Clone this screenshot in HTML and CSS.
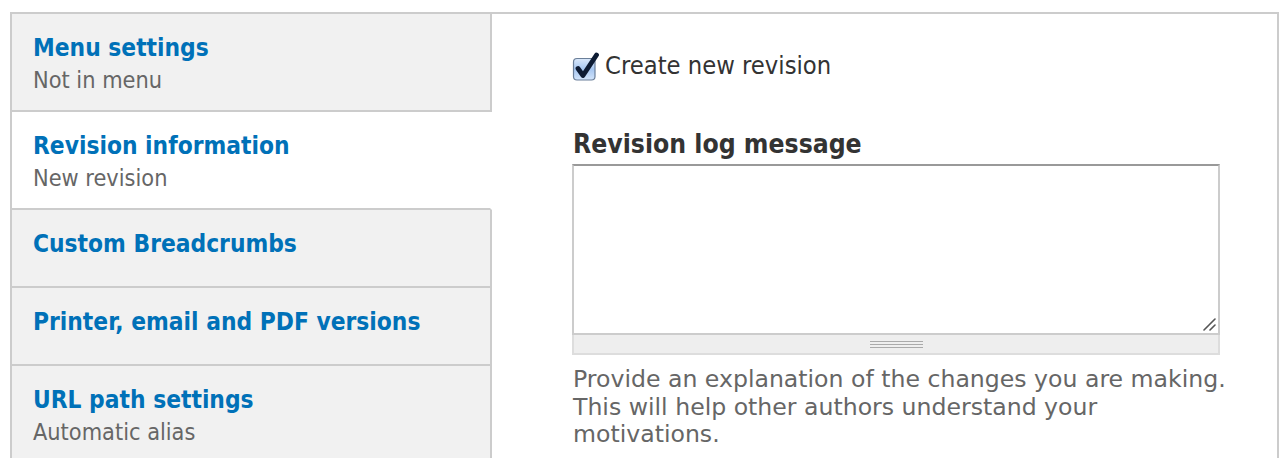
FILE: index.html
```html
<!DOCTYPE html>
<html lang="en">
<head>
<meta charset="utf-8">
<title>Vertical tabs</title>
<link rel="stylesheet" href="styles.css">
</head>
<body>
<div class="vtabs">
  <ul class="tab-list">
    <li class="tab">
      <a class="tab-title" href="#">Menu settings</a>
      <span class="tab-summary">Not in menu</span>
    </li>
    <li class="tab tab-active">
      <a class="tab-title" href="#">Revision information</a>
      <span class="tab-summary">New revision</span>
    </li>
    <li class="tab">
      <a class="tab-title" href="#">Custom Breadcrumbs</a>
    </li>
    <li class="tab">
      <a class="tab-title" href="#">Printer, email and PDF versions</a>
    </li>
    <li class="tab tab-last">
      <a class="tab-title" href="#">URL path settings</a>
      <span class="tab-summary">Automatic alias</span>
    </li>
  </ul>
  <div class="pane">
    <label class="check-row">
      <svg class="check-icon" width="27" height="30" viewBox="0 0 27 30" aria-hidden="true">
        <defs>
          <linearGradient id="boxg" x1="0" y1="0" x2="0" y2="1">
            <stop offset="0" stop-color="#dbe9fb"/>
            <stop offset="0.5" stop-color="#a6c6f0"/>
            <stop offset="1" stop-color="#d3e5fb"/>
          </linearGradient>
        </defs>
        <rect x="1.5" y="7.5" width="21.5" height="21.5" rx="3.5" fill="url(#boxg)" stroke="#6b7f99" stroke-width="1.2"/>
        <path d="M6 17.5 L11 24.5 L24.5 4" fill="none" stroke="#0d1b33" stroke-width="4.8" stroke-linecap="round" stroke-linejoin="round"/>
      </svg>
      <span class="check-label">Create new revision</span>
    </label>
    <div class="field">
      <div class="field-label">Revision log message</div>
      <div class="textarea-wrap">
        <textarea class="log"></textarea>
        <svg class="resizer" width="13" height="13" viewBox="0 0 13 13" aria-hidden="true">
          <path d="M12 1 L1 12 M12 7 L7 12" stroke="#555" stroke-width="1.6" stroke-linecap="round"/>
        </svg>
        <div class="grippie"><span class="grip-lines"></span></div>
      </div>
      <div class="field-desc">Provide an explanation of the changes you are making.<br>This will help other authors understand your<br>motivations.</div>
    </div>
  </div>
</div>
</body>
</html>
```
FILE: styles.css
```css
html, body {
  margin: 0;
  padding: 0;
  background: #fff;
  height: 458px;
  overflow: hidden;
}

body {
  font-family: "DejaVu Sans Condensed", "DejaVu Sans", sans-serif;
  font-stretch: semi-condensed;
  color: #333;
}

.vtabs {
  display: flex;
  margin: 12px 0 0 10px;
  width: 1269px;
  height: 460px;
  border: 2px solid #ccc;
  border-bottom: 0;
  box-sizing: border-box;
}

.tab-list {
  list-style: none;
  margin: 0;
  padding: 0;
  width: 480px;
  flex: none;
  display: flex;
  flex-direction: column;
}

.tab {
  background: #f1f1f1;
  border-right: 2px solid #ccc;
  border-bottom: 2px solid #ccc;
  padding: 11px 20px 20px 21px;
}

.tab-active {
  background: #fff;
  border-right-color: #fff;
}

.tab-last {
  flex: 1;
  border-bottom: 0;
}

.tab-title {
  display: block;
  font-size: 24.3px;
  font-weight: bold;
  line-height: 45px;
  color: #0071b8;
  text-decoration: none;
}

.tab-summary {
  display: block;
  font-size: 23.3px;
  line-height: 20px;
  color: #666;
}

.pane {
  flex: 1;
  padding: 37px 0 0 80px;
  display: flex;
  flex-direction: column;
}

.check-row {
  display: flex;
  align-items: center;
  gap: 6px;
  height: 30px;
}

.check-icon {
  flex: none;
}

.check-label {
  font-size: 25.3px;
  line-height: 30px;
  color: #333;
}

.field {
  display: flex;
  flex-direction: column;
}

.field-label {
  font-size: 26.3px;
  font-weight: bold;
  line-height: 30px;
  margin: 48px 0 5px 1px;
  color: #333;
}

.textarea-wrap {
  position: relative;
  width: 648px;
  display: flex;
  flex-direction: column;
}

.log {
  display: block;
  width: 100%;
  height: 171px;
  box-sizing: border-box;
  margin: 0;
  border: 2px solid #ccc;
  border-top-color: #999;
  background: #fff;
  resize: none;
}

.resizer {
  position: absolute;
  right: 4px;
  bottom: 24px;
}

.grippie {
  height: 20px;
  box-sizing: border-box;
  background: #eee;
  border: 2px solid #ddd;
  border-top: 0;
  display: flex;
  align-items: center;
  justify-content: center;
}

.grip-lines {
  display: block;
  width: 53px;
  height: 7px;
  border-top: 1px solid #aaa;
  border-bottom: 1px solid #aaa;
  box-sizing: border-box;
  background: linear-gradient(#aaa, #aaa) center / 100% 1px no-repeat;
}

.field-desc {
  margin: 11px 0 0 1px;
  white-space: nowrap;
  font-family: "DejaVu Sans", sans-serif;
  font-stretch: normal;
  font-size: 23.6px;
  line-height: 27.5px;
  color: #666;
}
```
